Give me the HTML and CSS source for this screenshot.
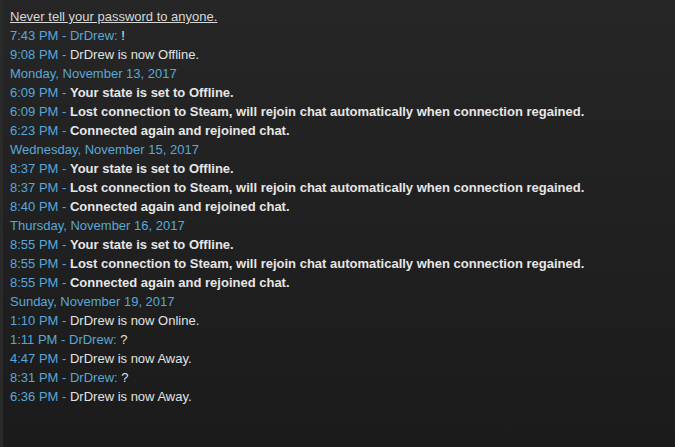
FILE: index.html
```html
<!DOCTYPE html>
<html lang="en">
<head>
    <meta charset="UTF-8">
    <title>Chat History</title>
    <link rel="stylesheet" href="styles.css">
</head>
<body>
<div class="history">
    <div class="notice">Never tell your password to anyone.</div>
    <div class="line"><span class="time">7:43 PM - DrDrew:</span> !</div>
    <div class="line"><span class="time">9:08 PM - </span>DrDrew is now Offline.</div>
    <div class="date">Monday, November 13, 2017</div>
    <div class="line"><span class="time">6:09 PM - </span><b>Your state is set to Offline.</b></div>
    <div class="line"><span class="time">6:09 PM - </span><b>Lost connection to Steam, will rejoin chat automatically when connection regained.</b></div>
    <div class="line"><span class="time">6:23 PM - </span><b>Connected again and rejoined chat.</b></div>
    <div class="date">Wednesday, November 15, 2017</div>
    <div class="line"><span class="time">8:37 PM - </span><b>Your state is set to Offline.</b></div>
    <div class="line"><span class="time">8:37 PM - </span><b>Lost connection to Steam, will rejoin chat automatically when connection regained.</b></div>
    <div class="line"><span class="time">8:40 PM - </span><b>Connected again and rejoined chat.</b></div>
    <div class="date">Thursday, November 16, 2017</div>
    <div class="line"><span class="time">8:55 PM - </span><b>Your state is set to Offline.</b></div>
    <div class="line"><span class="time">8:55 PM - </span><b>Lost connection to Steam, will rejoin chat automatically when connection regained.</b></div>
    <div class="line"><span class="time">8:55 PM - </span><b>Connected again and rejoined chat.</b></div>
    <div class="date">Sunday, November 19, 2017</div>
    <div class="line"><span class="time">1:10 PM - </span>DrDrew is now Online.</div>
    <div class="line"><span class="time">1:11 PM - DrDrew:</span> ?</div>
    <div class="line"><span class="time">4:47 PM - </span>DrDrew is now Away.</div>
    <div class="line"><span class="time">8:31 PM - DrDrew:</span> ?</div>
    <div class="line"><span class="time">6:36 PM - </span>DrDrew is now Away.</div>
</div>
</body>
</html>
```

FILE: styles.css
```css
* {
    margin: 0;
    padding: 0;
    box-sizing: border-box;
}

html, body {
    height: 100%;
}

body {
    background: linear-gradient(to bottom, #262626 0%, #1b1b1b 100%);
    font-family: 'Liberation Sans', Arial, sans-serif;
    font-size: 13px;
    line-height: 19px;
    color: #e2e2e2;
    overflow: hidden;
}

/* log column with the thin lighter rail on the left */
.history {
    height: 100%;
    border-left: 3px solid #2a2a2a;
    padding: 7px 0 0 7px;
}

.notice {
    color: #d8d8d8;
    text-decoration: underline;
}

.time,
.date {
    color: #59a8d7;
}

b {
    color: #e6e6e6;
}
```
